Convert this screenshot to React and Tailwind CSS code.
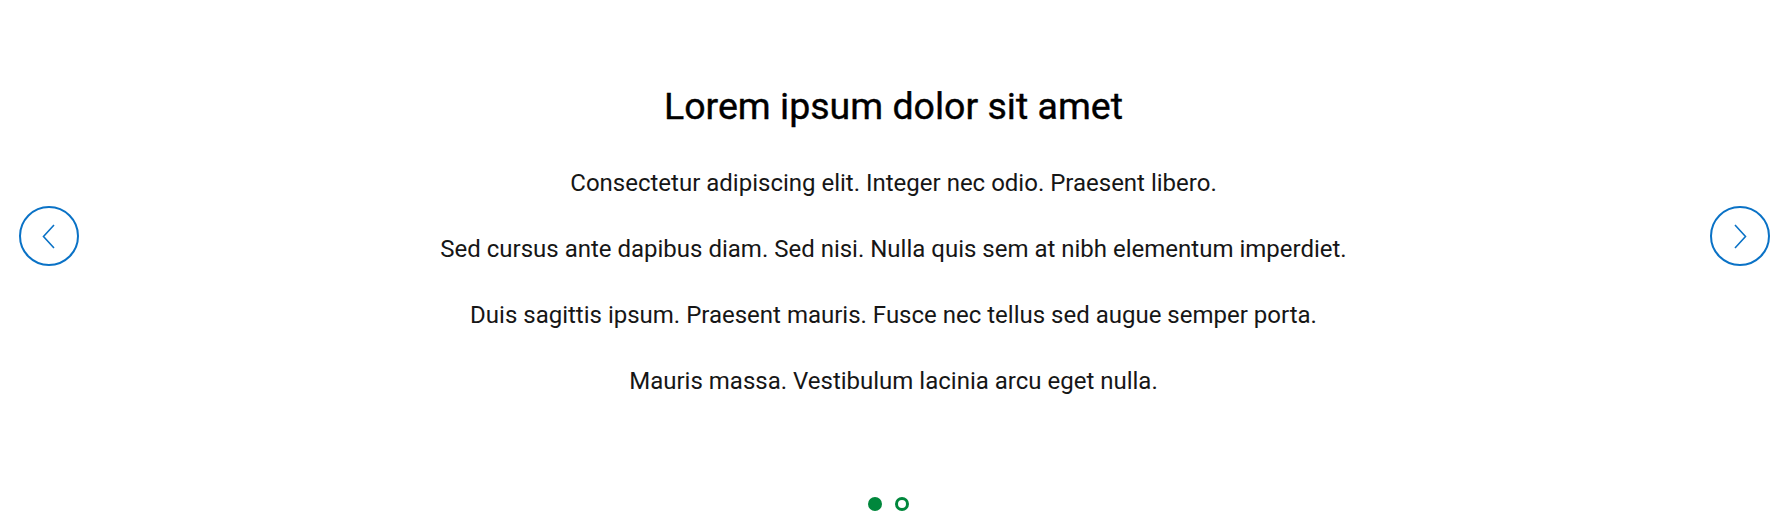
import { useState } from "react";

const slides = [
  {
    title: "Lorem ipsum dolor sit amet",
    lines: [
      "Consectetur adipiscing elit. Integer nec odio. Praesent libero.",
      "Sed cursus ante dapibus diam. Sed nisi. Nulla quis sem at nibh elementum imperdiet.",
      "Duis sagittis ipsum. Praesent mauris. Fusce nec tellus sed augue semper porta.",
      "Mauris massa. Vestibulum lacinia arcu eget nulla.",
    ],
  },
  {
    title: "Class aptent taciti sociosqu",
    lines: ["Ad litora torquent per conubia nostra, per inceptos himenaeos."],
  },
];

const Chevron = ({ dir }) => (
  <svg width="13" height="25" viewBox="0 0 13 25" fill="none">
    <path
      d={dir === "left" ? "M12 1L1.5 12.5L12 24" : "M1 1L11.5 12.5L1 24"}
      stroke="#0a72c6"
      strokeWidth="1.6"
    />
  </svg>
);

const App = () => {
  const [active, setActive] = useState(0);
  const slide = slides[active];

  const prev = () => setActive((active - 1 + slides.length) % slides.length);
  const next = () => setActive((active + 1) % slides.length);

  return (
    <div className="relative h-[520px] w-full bg-white font-['Roboto',sans-serif] flex flex-col items-center">
      {/* Slide content */}
      <div className="flex flex-col items-center pt-[84px] text-center">
        <h2 className="text-[37.5px] leading-[44px] font-normal text-black [-webkit-text-stroke:0.4px_black]">
          {slide.title}
        </h2>
        <div className="mt-[40px] flex flex-col gap-[36px]">
          {slide.lines.map((line) => (
            <p key={line} className="text-[24px] leading-[30px] text-[#161616]">
              {line}
            </p>
          ))}
        </div>
      </div>

      {/* Dots */}
      <div className="mt-auto mb-[9px] mr-[11px] flex items-center gap-[13px]">
        {slides.map((s, i) => (
          <button
            key={s.title}
            onClick={() => setActive(i)}
            className={
              i === active
                ? "h-[14px] w-[14px] rounded-full bg-[#00873c]"
                : "h-[14px] w-[14px] rounded-full border-[3px] border-[#00873c] bg-white"
            }
          />
        ))}
      </div>

      {/* Arrows */}
      <button
        onClick={prev}
        className="absolute left-[19px] top-[206px] flex h-[60px] w-[60px] items-center justify-center rounded-full border-2 border-[#0a72c6] bg-white"
      >
        <span className="-ml-[1px]">
          <Chevron dir="left" />
        </span>
      </button>
      <button
        onClick={next}
        className="absolute right-[17px] top-[206px] flex h-[60px] w-[60px] items-center justify-center rounded-full border-2 border-[#0a72c6] bg-white"
      >
        <span className="ml-[1px]">
          <Chevron dir="right" />
        </span>
      </button>
    </div>
  );
};

export default App;
